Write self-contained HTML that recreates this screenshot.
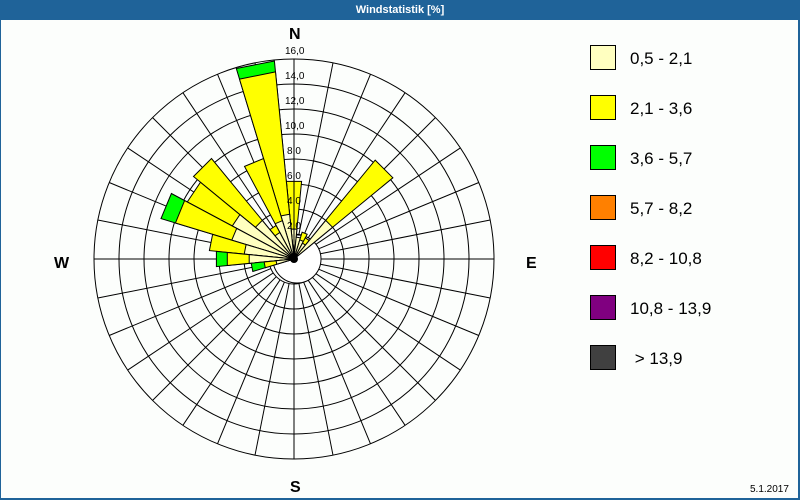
<!DOCTYPE html>
<html><head><meta charset="utf-8"><style>
html,body{margin:0;padding:0;background:#fff}
#w{position:relative;width:800px;height:500px;overflow:hidden;background:#fcfefc;font-family:"Liberation Sans",sans-serif}
#t{position:absolute;left:0;top:0;width:800px;height:20px;background:#1f6399;color:#fff;font-size:11px;font-weight:bold;text-align:center;line-height:20px}
#bl{position:absolute;left:0;top:20px;width:1px;height:480px;background:#1f6399}
#br{position:absolute;right:0;top:20px;width:2px;height:480px;background:#1f6399}
#bb{position:absolute;left:0;bottom:0;width:800px;height:2px;background:#1f6399}
.lg{position:absolute;left:590px;width:24px;height:23px;border:1px solid #000}
.lt{position:absolute;left:630px;font-size:17px;color:#000}
.d{position:absolute;font-weight:bold;font-size:16px;color:#000}
</style></head><body><div id="w">
<svg id="s" width="800" height="500" style="position:absolute;left:0;top:0"></svg>
<div id="t">Windstatistik [%]</div>
<div id="bl"></div><div id="br"></div><div id="bb"></div>
<div class="d" style="left:289px;top:26px">N</div>
<div class="d" style="left:54px;top:255px">W</div>
<div class="d" style="left:526px;top:255px">E</div>
<div class="d" style="left:290px;top:479px">S</div>
<div class="lg" style="top:45px;background:#ffffc0"></div><div class="lt" style="top:49px">0,5 - 2,1</div>
<div class="lg" style="top:95px;background:#ffff00"></div><div class="lt" style="top:99px">2,1 - 3,6</div>
<div class="lg" style="top:145px;background:#00ff00"></div><div class="lt" style="top:149px">3,6 - 5,7</div>
<div class="lg" style="top:195px;background:#ff8000"></div><div class="lt" style="top:199px">5,7 - 8,2</div>
<div class="lg" style="top:245px;background:#ff0000"></div><div class="lt" style="top:249px">8,2 - 10,8</div>
<div class="lg" style="top:295px;background:#800080"></div><div class="lt" style="top:299px">10,8 - 13,9</div>
<div class="lg" style="top:345px;background:#404040"></div><div class="lt" style="top:349px">&nbsp;&gt; 13,9</div>
<div style="position:absolute;left:750px;top:484px;font-size:10px">5.1.2017</div>
<div id="lab" style="position:absolute;left:0;top:0;font-size:10px">
<div style="position:absolute;left:285px;top:46px">16,0</div>
<div style="position:absolute;left:285px;top:71px">14,0</div>
<div style="position:absolute;left:285px;top:96px">12,0</div>
<div style="position:absolute;left:285px;top:121px">10,0</div>
<div style="position:absolute;left:287px;top:146px">8,0</div>
<div style="position:absolute;left:287px;top:171px">6,0</div>
<div style="position:absolute;left:287px;top:196px">4,0</div>
<div style="position:absolute;left:287px;top:221px">2,0</div>
</div>
</div>
<script>
var cx=294,cy=259,s='';
function P(r,a){a=a*Math.PI/180;return (cx+r*Math.sin(a)).toFixed(1)+','+(cy-r*Math.cos(a)).toFixed(1);}
s+='<line x1="94" y1="259" x2="494" y2="259" stroke="#000"/>';
for(var r=25;r<=200;r+=25)s+='<circle cx="'+cx+'" cy="'+cy+'" r="'+r+'" fill="none" stroke="#000"/>';
for(var i=0;i<32;i++){var a=i*11.25;s+='<polyline points="'+P(25,a)+' '+P(200,a)+'" stroke="#000" fill="none"/>';}
s+='<circle cx="297" cy="259" r="24" fill="#fff" stroke="#000"/>';
var bars=[[0,30,78,0],[11.25,22,0,0],[22.5,20,28,0],[33.75,18,24,0],[45,50,128,0],
[-11.25,45,188,199],[-22.5,40,105,0],[-33.75,30,38,0],[-45,50,130,0],[-56.25,70,121,0],
[-67.5,65,124,139],[-78.75,50,85,0],[-90,45,67,78],[-101.25,18,30,43]];
function wedge(a,r,c){return '<polygon points="'+cx+','+cy+' '+P(r,a-5.6)+' '+P(r,a+5.6)+'" fill="'+c+'" stroke="#000"/>';}
bars.forEach(function(b){
 if(b[3])s+=wedge(b[0],b[3],'#00ff00');
 if(b[2])s+=wedge(b[0],b[2],'#ffff00');
 s+=wedge(b[0],b[1],'#ffffc0');
});
s+='<polyline points="294,59 294,259" stroke="#000"/>';
s+='<circle cx="'+cx+'" cy="'+cy+'" r="4" fill="#000"/>';
document.getElementById('s').innerHTML=s;
</script>
</body></html>
